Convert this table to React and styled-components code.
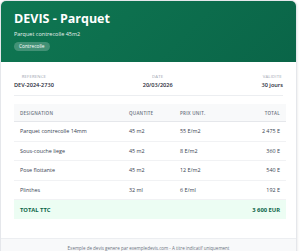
import styled, { createGlobalStyle } from "styled-components";

const Global = createGlobalStyle`
  html, body {
    margin: 0;
    padding: 0;
    background: #ffffff;
    font-family: "Open Sans", "Liberation Sans", sans-serif;
  }
`;

const rows = [
  { name: "Parquet contrecolle 14mm", qty: "45 m2", unit: "55 E/m2", total: "2 475 E" },
  { name: "Sous-couche liege", qty: "45 m2", unit: "8 E/m2", total: "360 E" },
  { name: "Pose flottante", qty: "45 m2", unit: "12 E/m2", total: "540 E" },
  { name: "Plinthes", qty: "32 ml", unit: "6 E/ml", total: "192 E" },
];

export default function App() {
  return (
    <>
      <Global />
      <Card>
        <Header>
          <Title>DEVIS - Parquet</Title>
          <Subtitle>Parquet contrecolle 45m2</Subtitle>
          <Badge>Contrecolle</Badge>
        </Header>

        <Info>
          <InfoItem>
            <Label>Reference</Label>
            <Value>DEV-2024-2730</Value>
          </InfoItem>
          <InfoItem>
            <Label>Date</Label>
            <Value>20/03/2026</Value>
          </InfoItem>
          <InfoItem>
            <Label>Validite</Label>
            <Value>30 jours</Value>
          </InfoItem>
        </Info>

        <Body>
          <Table>
            <colgroup>
              <col style={{ width: 109 }} />
              <col style={{ width: 51 }} />
              <col style={{ width: 56 }} />
              <col style={{ width: 56 }} />
            </colgroup>
            <thead>
              <tr>
                <Th>Designation</Th>
                <Th>Quantite</Th>
                <Th>Prix unit.</Th>
                <Th $right>Total</Th>
              </tr>
            </thead>
            <tbody>
              {rows.map((r) => (
                <tr key={r.name}>
                  <Td>{r.name}</Td>
                  <Td>{r.qty}</Td>
                  <Td>{r.unit}</Td>
                  <Td $right>{r.total}</Td>
                </tr>
              ))}
              <TotalRow>
                <TotalCell colSpan={3}>TOTAL TTC</TotalCell>
                <TotalCell $right>3 600 EUR</TotalCell>
              </TotalRow>
            </tbody>
          </Table>
        </Body>

        <Footer>
          Exemple de devis genere par exempledevis.com - A titre indicatif uniquement
        </Footer>
      </Card>
    </>
  );
}

const Card = styled.div`
  width: 297px;
  box-sizing: border-box;
  background: #ffffff;
  border: 1px solid #e5e7eb;
  border-radius: 6px;
  overflow: hidden;
  box-shadow: 0 1px 3px rgba(0, 0, 0, 0.12);
`;

const Header = styled.div`
  background: linear-gradient(135deg, #0f7752 0%, #0a6548 100%);
  color: #ffffff;
  padding: 10px 13px 11px;
  display: flex;
  flex-direction: column;
  align-items: flex-start;
`;

const Title = styled.h1`
  margin: 0;
  font-size: 12.5px;
  line-height: 16px;
  font-weight: 700;
`;

const Subtitle = styled.p`
  margin: 3px 0 0;
  font-size: 5.5px;
  line-height: 8px;
  opacity: 0.9;
`;

const Badge = styled.span`
  margin-top: 4px;
  font-size: 4.8px;
  line-height: 9px;
  padding: 0 5px;
  border-radius: 5px;
  background: rgba(255, 255, 255, 0.22);
`;

const Info = styled.div`
  margin: 0 13px;
  padding: 11px 0 6px;
  border-bottom: 1px solid #eceef1;
  display: flex;
  justify-content: space-between;
`;

const InfoItem = styled.div`
  display: flex;
  flex-direction: column;
  align-items: center;
  gap: 2px;
`;

const Label = styled.span`
  font-size: 4.3px;
  line-height: 6px;
  text-transform: uppercase;
  color: #9ca3af;
  letter-spacing: 0.15px;
`;

const Value = styled.span`
  font-size: 5.6px;
  line-height: 8px;
  font-weight: 600;
  color: #1f2937;
`;

const Body = styled.div`
  padding: 8px 13px 19px;
`;

const Table = styled.table`
  width: 100%;
  border-collapse: collapse;
  table-layout: fixed;
`;

const Th = styled.th`
  background: #f8f9fa;
  border-bottom: 1px solid #e5e7eb;
  height: 17px;
  padding: 0 6px;
  font-size: 4.5px;
  font-weight: 600;
  letter-spacing: 0.25px;
  text-transform: uppercase;
  color: #6b7280;
  text-align: ${(p) => (p.$right ? "right" : "left")};
`;

const Td = styled.td`
  height: 18.5px;
  padding: 0 6px;
  font-size: 5.4px;
  color: #374151;
  border-bottom: 1px solid #f1f2f4;
  text-align: ${(p) => (p.$right ? "right" : "left")};
`;

const TotalRow = styled.tr`
  background: #ecfdf3;
`;

const TotalCell = styled.td`
  height: 19px;
  padding: 0 6px;
  font-size: 5.8px;
  font-weight: 700;
  color: #0a6548;
  text-align: ${(p) => (p.$right ? "right" : "left")};
`;

const Footer = styled.div`
  background: #f8f9fa;
  border-top: 1px solid #eceef1;
  height: 18px;
  display: flex;
  align-items: center;
  justify-content: center;
  font-size: 4.5px;
  color: #6b7280;
`;
